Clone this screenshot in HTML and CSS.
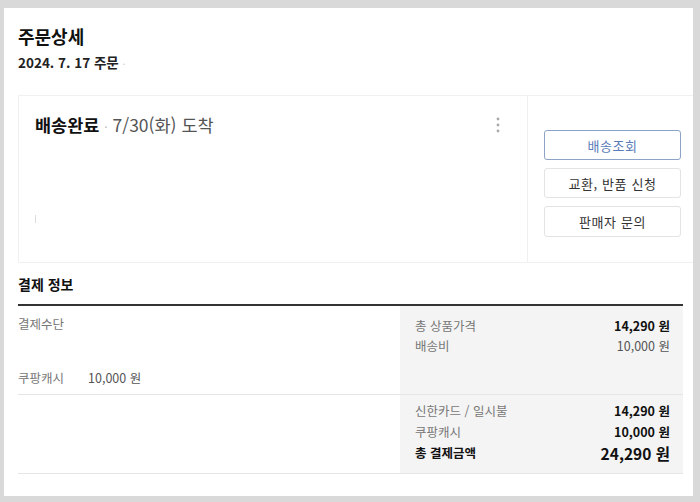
FILE: index.html
```html
<!DOCTYPE html>
<html lang="ko">
<head>
<meta charset="utf-8">
<link rel="stylesheet" href="styles.css">
</head>
<body>
<div class="page">
  <h1 class="title">주문상세</h1>
  <div class="order-date">2024. 7. 17 주문 <span class="dot">·</span></div>

  <div class="card">
    <div class="card-main">
      <div class="status-row">
        <div class="status"><b>배송완료</b> <span class="sep">·</span> 7/30(화) 도착</div>
        <svg class="kebab" width="6" height="16" viewBox="0 0 6 16"><circle cx="3" cy="2" r="1.4"/><circle cx="3" cy="8" r="1.4"/><circle cx="3" cy="14" r="1.4"/></svg>
      </div>
      <div class="tick"></div>
    </div>
    <div class="card-side">
      <button class="btn btn-primary">배송조회</button>
      <button class="btn">교환, 반품 신청</button>
      <button class="btn btn-tall">판매자 문의</button>
    </div>
  </div>

  <h2 class="section-title">결제 정보</h2>
  <div class="pay">
    <div class="pay-row pay-row-1">
      <div class="pay-left">
        <div class="label">결제수단</div>
        <div class="method"><span class="label">쿠팡캐시</span><span class="amount">10,000 원</span></div>
      </div>
      <div class="pay-right">
        <div class="line"><span class="label">총 상품가격</span><span class="val strong">14,290 원</span></div>
        <div class="line"><span class="label">배송비</span><span class="val">10,000 원</span></div>
      </div>
    </div>
    <div class="pay-row pay-row-2">
      <div class="pay-left"></div>
      <div class="pay-right">
        <div class="line l2"><span class="label">신한카드 / 일시불</span><span class="val strong">14,290 원</span></div>
        <div class="line l2"><span class="label">쿠팡캐시</span><span class="val strong">10,000 원</span></div>
        <div class="line l2 total"><span class="total-label">총 결제금액</span><span class="total-val">24,290 원</span></div>
      </div>
    </div>
  </div>
</div>
</body>
</html>
```

FILE: styles.css
```css
* { box-sizing: border-box; }
html, body { margin: 0; padding: 0; }
body {
  background: #d9d9d9;
  font-family: "Noto Sans CJK KR", "Noto Sans", sans-serif;
  color: #111;
  width: 700px;
  height: 502px;
  overflow: hidden;
}
.page {
  margin: 8px 7px 0 4px;
  height: 488px;
  background: #fff;
  padding: 16px 10px 0 14px;
}
.title {
  margin: 0;
  font-size: 18px;
  line-height: 24px;
  font-weight: 700;
  color: #111;
}
.order-date {
  margin-top: 5px;
  font-size: 13.5px;
  line-height: 18px;
  font-weight: 700;
  color: #222;
}
.order-date .dot { color: #ccc; font-weight: 400; font-size: 10px; }
.card {
  margin-top: 22px;
  margin-right: -10px;
  height: 168px;
  border: 1px solid #f0f0f0;
  border-right: none;
  display: flex;
}
.card-main {
  flex: 1;
  padding: 17px 16px 0 16px;
  display: flex;
  flex-direction: column;
}
.status-row {
  display: flex;
  justify-content: space-between;
  align-items: flex-start;
  padding-right: 10px;
}
.status {
  font-size: 17.5px;
  line-height: 24px;
  color: #555;
}
.status b { color: #111; font-weight: 700; }
.status .sep { color: #bbb; font-size: 12px; }
.kebab { fill: #aaa; margin-top: 4px; }
.tick {
  width: 1px;
  height: 8px;
  background: #ddd;
  margin-top: 76px;
}
.card-side {
  width: 166px;
  border-left: 1px solid #f0f0f0;
  padding: 34px 12px 0 16px;
  display: flex;
  flex-direction: column;
  gap: 8px;
}
.btn {
  height: 30px;
  background: #fff;
  border: 1px solid #e3e3e3;
  border-radius: 3px;
  font-family: inherit;
  font-size: 13px;
  letter-spacing: 0.6px;
  color: #333;
  padding: 0;
}
.btn-primary {
  border-color: #8ca3c8;
  color: #5b7cb8;
}
.btn-tall { height: 31px; }
.section-title {
  margin: 11px 0 0;
  font-size: 14px;
  line-height: 20px;
  font-weight: 700;
  color: #111;
}
.pay {
  margin-top: 10px;
  border-top: 2px solid #333;
}
.pay-row {
  display: flex;
  border-bottom: 1px solid #e6e6e6;
}
.pay-row-1 { height: 89px; }
.pay-row-2 { height: 79px; }
.pay-left {
  flex: 1;
  display: flex;
  flex-direction: column;
  justify-content: space-between;
  padding: 9px 0 7px;
  font-size: 12.5px;
  line-height: 18px;
}
.pay-right {
  width: 283px;
  background: #f4f4f4;
  padding: 9px 13px 0 15px;
  font-size: 12.5px;
}
.pay-row-2 .pay-right { padding-top: 5px; }
.label { color: #777; }
.method { display: flex; gap: 24px; }
.amount { color: #555; }
.line {
  display: flex;
  justify-content: space-between;
  align-items: center;
  height: 20px;
}
.l2 { height: 21px; }
.val { color: #555; }
.val.strong { color: #111; font-weight: 700; }
.total-label { font-weight: 700; color: #111; }
.total-val { font-weight: 700; font-size: 15.5px; color: #111; }
```
